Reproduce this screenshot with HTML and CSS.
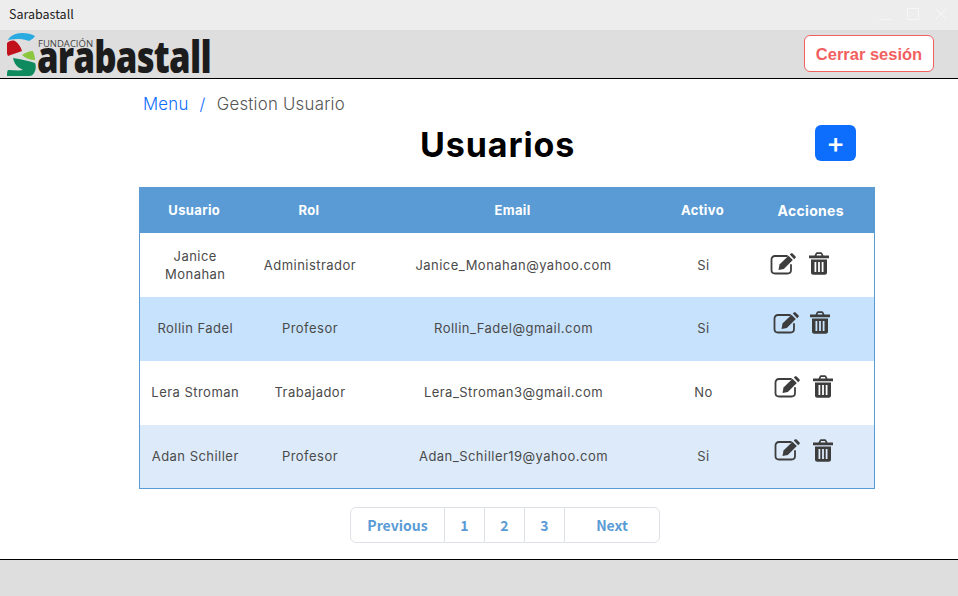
FILE: index.html
```html
<!DOCTYPE html>
<html lang="es">
  <head>
    <meta charset="UTF-8" />
    <title>Sarabastall</title>
    <link rel="stylesheet" href="styles.css">
  </head>
  <body>
    <svg class="icon-defs" width="0" height="0">
      <defs>
        <symbol id="icon-edit" viewBox="0 0 26 22">
          <path d="M17 3H5C3 3 1.500 4.500 1.500 6.500V17c0 2 1.500 3.500 3.500 3.500h12.500c2 0 3.500-1.500 3.500-3.500v-5" fill="none" stroke="currentColor" stroke-width="1.800" stroke-linecap="round"/>
          <path d="M9.500 11.500 18.500 2.800l4.300 4.300-9 8.900-5.300 1z" fill="currentColor"/>
          <path d="M19.800 1.500 20.800.5c.5-.5 1.300-.5 1.800 0l2.800 2.800c.5.500.5 1.300 0 1.800l-1.200 1.100z" fill="currentColor"/>
        </symbol>
        <symbol id="icon-trash" viewBox="0 0 20 23">
          <path d="M0 3.500h5.500L6.800 1c.2-.5.6-.8 1.200-.8h4c.6 0 1 .3 1.200.8l1.300 2.500H20V6.300H0zM8 2 7.500 3.500h5L12 2z" fill="currentColor" fill-rule="evenodd"/>
          <path d="M2 7.500h16v13c0 1.300-1 2.300-2.300 2.300H4.300C3 22.800 2 21.800 2 20.500zM5.500 10v10h1.800V10zm3.600 0v10h1.800V10zm3.600 0v10h1.800V10z" fill="currentColor" fill-rule="evenodd"/>
        </symbol>
      </defs>
    </svg>

    <div class="titlebar">
      <span class="titlebar-name">Sarabastall</span>
      <div class="window-controls">
        <svg width="12" height="12" viewBox="0 0 12 12"><path d="M0 11.500h12" stroke="#f6f6f6" fill="none"/></svg>
        <svg width="12" height="12" viewBox="0 0 12 12"><path d="M.5.500h11v11H.5z" stroke="#f6f6f6" fill="none"/></svg>
        <svg width="12" height="12" viewBox="0 0 12 12"><path d="M1 1l10 10M11 1 1 11" stroke="#f6f6f6" fill="none"/></svg>
      </div>
    </div>

    <header class="navbar">
      <div class="logo">
        <svg class="logo-mark" width="30" height="44" viewBox="0 0 30 44">
          <path d="M1 8C3 4 8 1 15 1c5 0 10 1 13 3-1 2-4 4-6 5-3-1-6-2-9-2C9 7 5 7 1 8z" fill="#29abe2"/>
          <path d="M0 11c2-2 5-3 8-2 3 2 6 6 7 10-4 2-10 3-14 5-2-4-2-9-1-13z" fill="#c1121c"/>
          <path d="M15 23c3-2 7-4 11-4 1 3 2 6 2 9-5 0-10-2-13-5z" fill="#8cc63f"/>
          <path d="M6 26c8 1 16 3 22 5 1 2 1 6 0 8-1 3-3 5-6 5H0c0-2 0-5 1-6 5 0 11 1 15 0-3-2-8-3-10-12z" fill="#0f8a5f"/>
        </svg>
        <div class="logo-text">
          <span class="logo-small">FUNDACIÓN</span>
          <span class="logo-big">arabastall</span>
        </div>
      </div>
      <button class="logout">Cerrar sesión</button>
    </header>

    <main class="content">
      <nav class="breadcrumb">
        <a href="#">Menu</a>
        <span class="breadcrumb-sep">/</span>
        <span class="breadcrumb-current">Gestion Usuario</span>
      </nav>

      <div class="heading">
        <h1>Usuarios</h1>
        <button class="add">+</button>
      </div>

      <table class="users">
        <thead>
          <tr>
            <th class="col-user">Usuario</th>
            <th class="col-role">Rol</th>
            <th class="col-email">Email</th>
            <th class="col-active">Activo</th>
            <th class="col-actions">Acciones</th>
          </tr>
        </thead>
        <tbody>
          <tr class="row-first">
            <td>Janice Monahan</td>
            <td>Administrador</td>
            <td>Janice_Monahan@yahoo.com</td>
            <td>Si</td>
            <td><div class="actions"><svg class="edit"><use href="#icon-edit"/></svg><svg class="trash"><use href="#icon-trash"/></svg></div></td>
          </tr>
          <tr class="row-blue">
            <td>Rollin Fadel</td>
            <td>Profesor</td>
            <td>Rollin_Fadel@gmail.com</td>
            <td>Si</td>
            <td><div class="actions"><svg class="edit"><use href="#icon-edit"/></svg><svg class="trash"><use href="#icon-trash"/></svg></div></td>
          </tr>
          <tr>
            <td>Lera Stroman</td>
            <td>Trabajador</td>
            <td>Lera_Stroman3@gmail.com</td>
            <td>No</td>
            <td><div class="actions"><svg class="edit"><use href="#icon-edit"/></svg><svg class="trash"><use href="#icon-trash"/></svg></div></td>
          </tr>
          <tr class="row-pale">
            <td>Adan Schiller</td>
            <td>Profesor</td>
            <td>Adan_Schiller19@yahoo.com</td>
            <td>Si</td>
            <td><div class="actions"><svg class="edit"><use href="#icon-edit"/></svg><svg class="trash"><use href="#icon-trash"/></svg></div></td>
          </tr>
        </tbody>
      </table>

      <div class="pagination">
        <a class="page page-prev" href="#">Previous</a>
        <a class="page" href="#">1</a>
        <a class="page" href="#">2</a>
        <a class="page" href="#">3</a>
        <a class="page page-next" href="#">Next</a>
      </div>
    </main>

    <footer class="footer"></footer>
  </body>
</html>
```

FILE: styles.css
```css
* {
  box-sizing: border-box;
}

html,
body {
  margin: 0;
  height: 100%;
}

body {
  display: flex;
  flex-direction: column;
  height: 596px;
  overflow: hidden;
  background-color: #fff;
  font-family: 'Inter', sans-serif;
}

.icon-defs {
  display: block;
  height: 0;
}

/* Window title */
.titlebar {
  display: flex;
  justify-content: space-between;
  align-items: center;
  height: 30px;
  padding: 0 11px 3px 9px;
  background-color: #ededed;
  font-family: 'Noto Sans CJK JP', 'Noto Sans', sans-serif;
  font-size: 12.500px;
  color: #222;
}

.window-controls {
  display: flex;
  gap: 16px;
}

/* Top bar */
.navbar {
  display: flex;
  justify-content: space-between;
  align-items: center;
  height: 49px;
  padding: 0 24px 0 7px;
  background-color: #dedede;
  border-bottom: 1px solid #000;
}

.logo {
  display: flex;
  align-items: flex-end;
  height: 48px;
}

.logo-mark {
  flex: none;
  margin-bottom: 2px;
}

.logo-text {
  display: flex;
  flex-direction: column;
}

.logo-small {
  margin: 0 0 -16px 1px;
  font-family: 'Open Sans', sans-serif;
  font-size: 9.500px;
  color: #444;
}

.logo-big {
  width: 174px;
  font-family: 'Open Sans', sans-serif;
  font-size: 44px;
  font-weight: 800;
  line-height: 44px;
  letter-spacing: -1px;
  color: #1c1c1c;
  transform: scaleX(.79);
  transform-origin: left;
  white-space: nowrap;
}

.logout {
  width: 130px;
  height: 37px;
  margin-bottom: 1px;
  padding: 1px 0 0;
  background-color: #fff;
  border: 1px solid #f15f5f;
  border-radius: 6px;
  font-family: 'Liberation Sans', sans-serif;
  font-size: 16.500px;
  font-weight: 700;
  color: #f15f5f;
}

/* Main column */
.content {
  flex: 1;
  display: flex;
  flex-direction: column;
  align-items: flex-start;
  padding: 14px 0 0 139px;
}

.breadcrumb {
  display: flex;
  gap: 11px;
  margin-left: 4px;
  font-size: 16.800px;
  font-weight: 300;
  letter-spacing: .25px;
  line-height: 22px;
}

.breadcrumb a {
  color: #0d6efd;
  text-decoration: none;
}

.breadcrumb-sep {
  color: #0d6efd;
}

.breadcrumb-current {
  color: #555;
}

.heading {
  display: flex;
  align-items: center;
  width: 736px;
  height: 41px;
  margin-top: 9px;
  padding: 0 19px 0 281px;
}

.heading h1 {
  margin: 0;
  font-size: 34px;
  font-weight: 700;
  letter-spacing: .9px;
  color: #000;
}

.add {
  width: 41px;
  height: 36px;
  margin: -3px 0 0 auto;
  padding: 0;
  background-color: #0d6efd;
  border: 0;
  border-radius: 6px;
  font-family: 'Inter', sans-serif;
  font-size: 28px;
  line-height: 36px;
  font-weight: 500;
  color: #fff;
}

/* Users table */
.users {
  width: 736px;
  margin-top: 22px;
  border: 1px solid #5a9bd5;
  border-collapse: collapse;
  table-layout: fixed;
  font-size: 13px;
  letter-spacing: .47px;
  color: #4a4a4a;
}

.users th {
  height: 45px;
  padding: 0 9px 0 7px;
  background-color: #5a9bd5;
  font-size: 13px;
  font-weight: 700;
  letter-spacing: .35px;
  color: #fff;
}

.users th.col-actions {
  font-size: 14px;
  letter-spacing: .3px;
}

.users td {
  height: 64px;
  padding: 8px;
  text-align: center;
  line-height: 19px;
}

.users .row-first td {
  line-height: 18px;
}

.users td:last-child {
  padding: 0;
}

.col-user { width: 111px; }
.col-role { width: 119px; }
.col-email { width: 288px; }
.col-active { width: 92px; }

.row-blue {
  background-color: #c7e2fd;
}

.row-pale {
  background-color: #dceafa;
}

.actions {
  display: flex;
  align-items: center;
  gap: 13px;
  margin: 0 0 12px 24px;
  color: #3d3d3d;
}

.row-first .actions {
  margin: 0 0 2px 20px;
}

.row-blue .actions {
  margin-left: 23px;
  gap: 11px;
}

.edit {
  width: 26px;
  height: 22px;
}

.trash {
  width: 20px;
  height: 23px;
}

/* Pagination */
.pagination {
  display: flex;
  width: 310px;
  height: 36px;
  margin: 18px 0 0 211px;
  background-color: #fff;
  border: 1px solid #dee2e6;
  border-radius: 6px;
  font-family: 'Noto Sans CJK JP', 'Noto Sans', sans-serif;
  font-size: 14px;
  font-weight: 700;
}

.page {
  display: flex;
  justify-content: center;
  align-items: center;
  width: 40px;
  border-right: 1px solid #dee2e6;
  color: #5a9bd5;
  text-decoration: none;
}

.page-prev {
  width: 94px;
}

.page-next {
  flex: 1;
  border-right: 0;
}

.footer {
  flex: none;
  height: 37px;
  background-color: #dedede;
  border-top: 1px solid #000;
}
```
